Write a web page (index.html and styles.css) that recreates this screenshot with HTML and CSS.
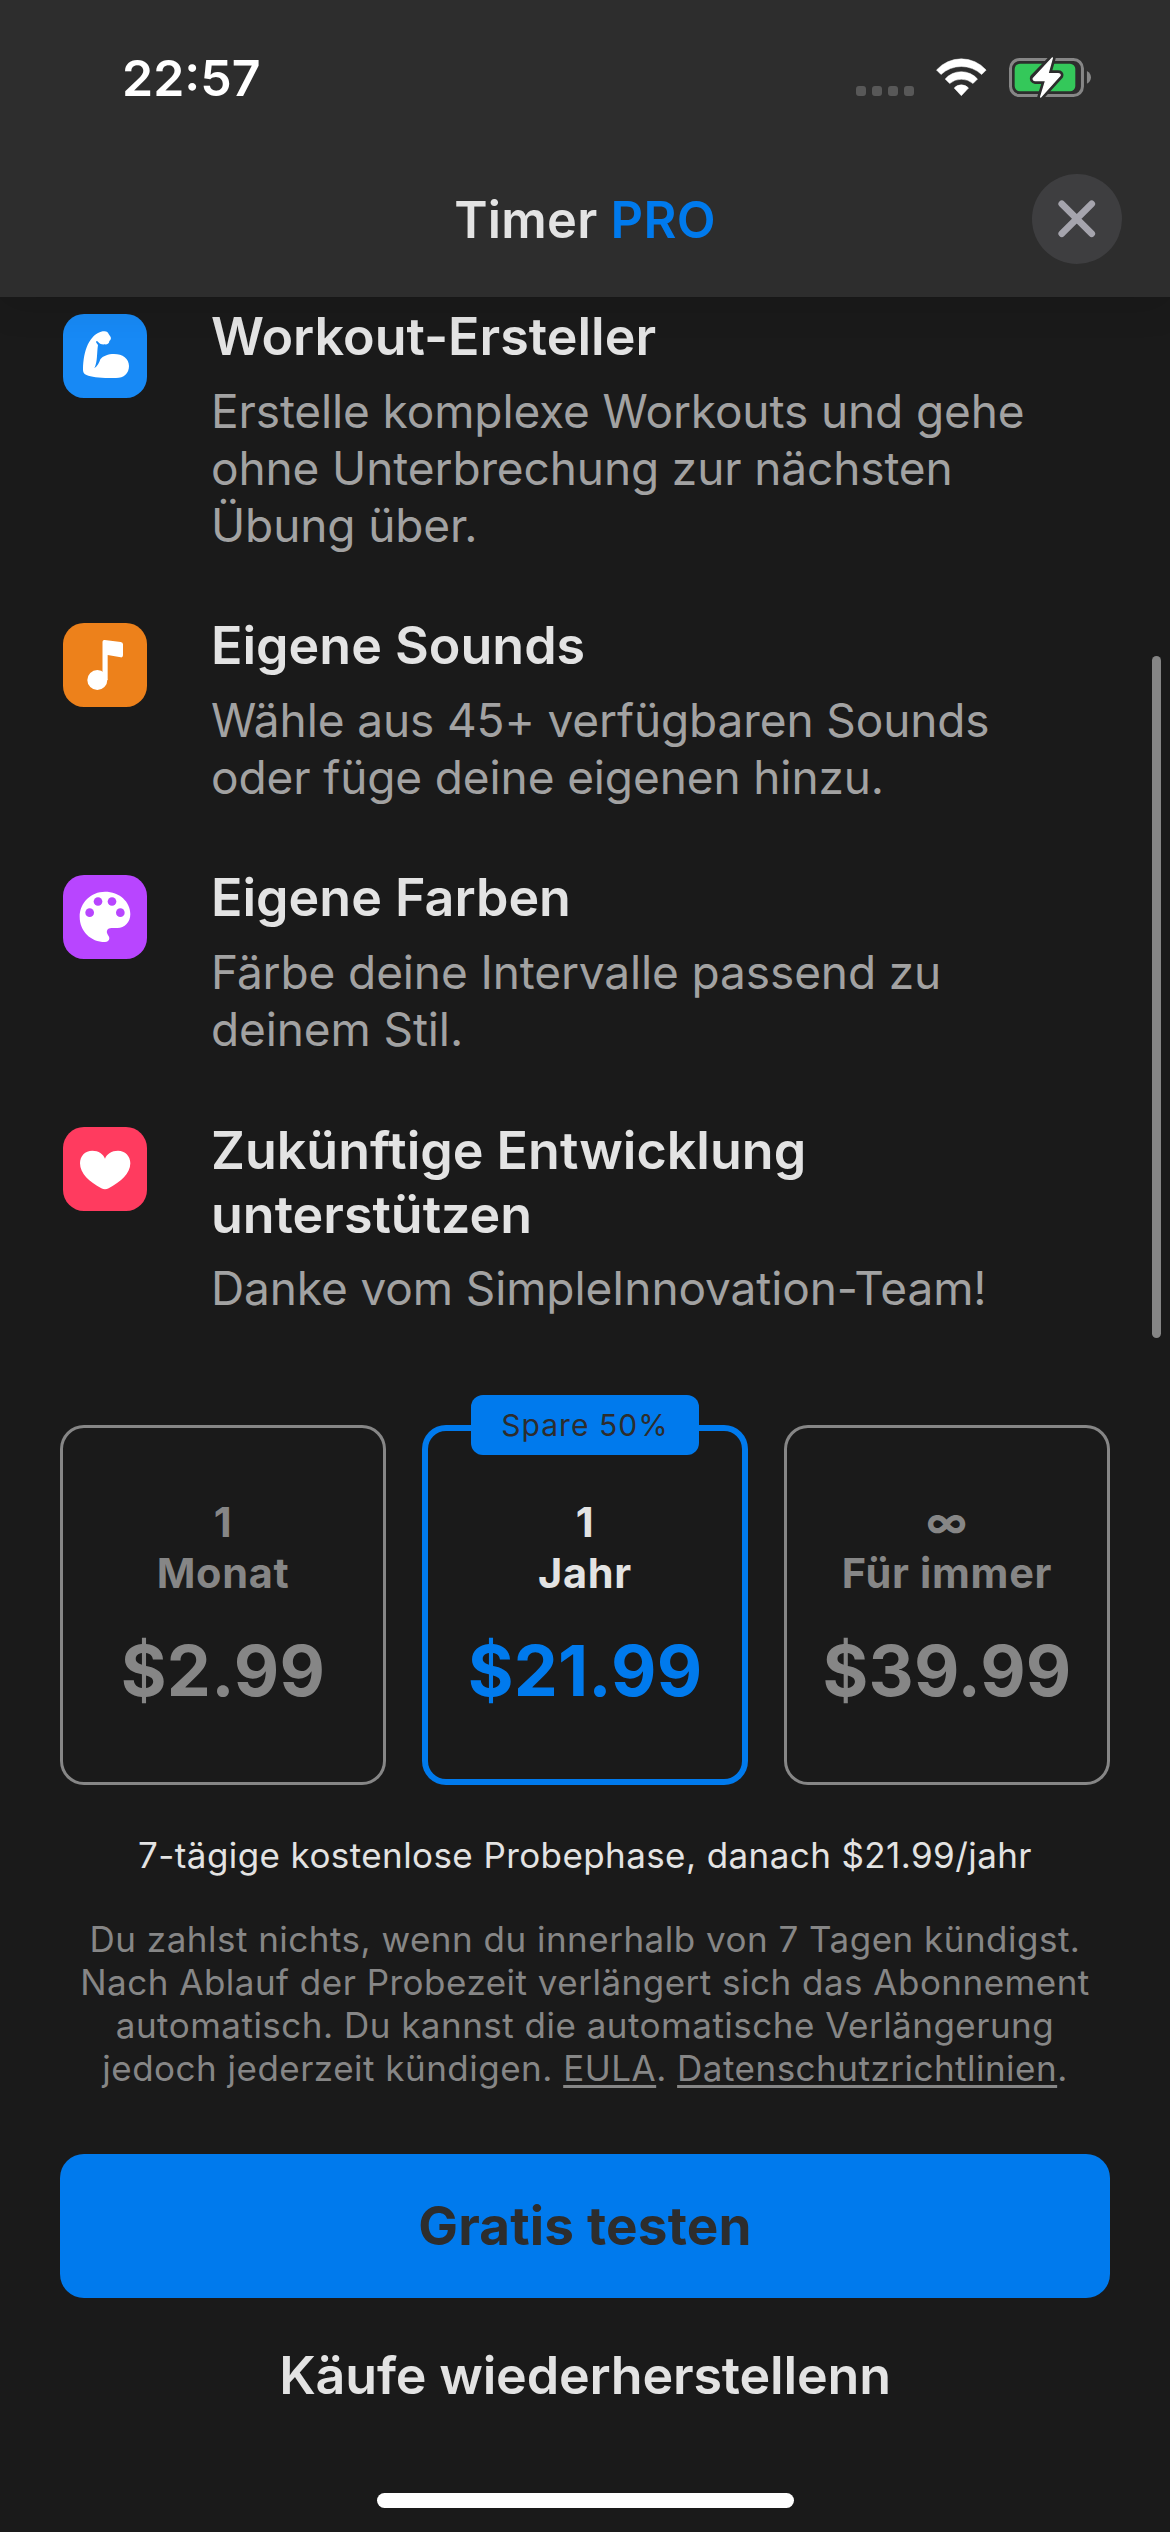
FILE: index.html
```html
<!DOCTYPE html>
<html lang="de">
<head>
<meta charset="utf-8">
<title>Timer PRO</title>
<link rel="stylesheet" href="styles.css">
</head>
<body>
<div class="screen">
  <header class="header">
    <div class="status">
      <span class="time">22:57</span>
      <div class="indicators">
        <div class="signal"><i></i><i></i><i></i><i></i></div>
        <svg class="wifi" viewBox="348 54 153 117">
          <g fill="#fff" stroke="#fff" stroke-width="1.5" stroke-linejoin="round">
            <path d="M349.500 90A99.700 99.700 0 0 1 498.500 90L485 103.500A89.500 89.500 0 0 0 363 103.500Z"/>
            <path d="M375.500 117A64.600 64.600 0 0 1 472.500 117L459 130.500A53.600 53.600 0 0 0 389 130.500Z"/>
            <path d="M402.500 144A29 29 0 0 1 445.500 144L424 167Z"/>
          </g>
        </svg>
        <svg class="battery" viewBox="567 51 247 123">
          <rect x="571.500" y="58.500" width="216" height="108" rx="27" fill="none" stroke="#868686" stroke-width="9"/>
          <rect x="584" y="71" width="182" height="83" rx="16" fill="#34c85a"/>
          <path d="M801 93C809 97 813 104 813 112S809 127 801 131Z" fill="#868686"/>
          <path d="M697 54L640 113Q638 121 646 122H677L662 171L720 107Q722 101 714 101H684Z" fill="#2d2d2d" stroke="#2d2d2d" stroke-width="20" stroke-linejoin="round"/>
          <path d="M697 54L640 115Q638 121 646 122H677L662 171L720 107Q722 101 714 101H684Z" fill="#fff" stroke="#fff" stroke-width="4" stroke-linejoin="round"/>
        </svg>
      </div>
    </div>
    <div class="navbar">
      <h1 class="title">Timer <span>PRO</span></h1>
      <button class="close" aria-label="Schließen">
        <svg viewBox="0 0 90 90"><path d="M29.800 29.800L59.700 59.700M59.700 29.800L29.800 59.700" stroke="#a5a4ad" stroke-width="6.800" stroke-linecap="round"/></svg>
      </button>
    </div>
  </header>

  <main class="content">
    <section class="features">
      <article class="feature">
        <svg class="tile blue" viewBox="69 72 252 252"><path fill="#fff" d="M129 238C130 182 148 133 188 124C198 122 204 125 206 132L212 141C214 146 212 150 208 153C208 160 202 164 194 163C184 164 177 160 174 155C170 151 167 154 169 158L174 165C170 190 173 215 163 235C172 230 178 218 181 208C188 198 205 192 222 192C248 192 267 206 267 228C267 250 252 264 228 264H196C167 263 146 260 135 253C130 249 129 244 129 238Z"/></svg>
        <div class="copy">
          <h2>Workout-Ersteller</h2>
          <p>Erstelle komplexe Workouts und gehe<br>ohne Unterbrechung zur nächsten<br>Übung über.</p>
        </div>
      </article>
      <article class="feature">
        <svg class="tile orange" viewBox="69 69 252 252"><g fill="#fff"><circle cx="172" cy="240" r="30"/><path d="M187.500 240V125Q188 119 194 120L242 126Q249 127 249 133V166Q249 173 242 172L203 165V240Z"/></g></svg>
        <div class="copy">
          <h2>Eigene Sounds</h2>
          <p>Wähle aus 45+ verfügbaren Sounds<br>oder füge deine eigenen hinzu.</p>
        </div>
      </article>
      <article class="feature">
        <svg class="tile purple" viewBox="69 75 252 252"><path fill="#fff" d="M195 125C238 125 271 155 271 192C271 217 254 234 232 234H214C203 234 198 243 202 251C204 256 208 259 208 265C208 272 202 276 195 276C152 276 119 243 119 200C119 158 153 125 195 125Z"/><g fill="#b845ff"><circle cx="149" cy="188" r="13"/><circle cx="174" cy="154.500" r="13"/><circle cx="216" cy="154.500" r="13"/><circle cx="241" cy="188" r="13"/></g></svg>
        <div class="copy">
          <h2>Eigene Farben</h2>
          <p>Färbe deine Intervalle passend zu<br>deinem Stil.</p>
        </div>
      </article>
      <article class="feature">
        <svg class="tile red" viewBox="69 831 252 252"><path fill="#fff" d="M195 926C190 912 176 902 157 902C135 902 120 918 120 940C120 970 148 996 184 1015Q195 1021 206 1015C242 996 271 970 271 940C271 918 255 902 234 902C215 902 200 912 195 926Z"/></svg>
        <div class="copy wrapped">
          <h2>Zukünftige Entwicklung<br>unterstützen</h2>
          <p>Danke vom SimpleInnovation-Team!</p>
        </div>
      </article>
    </section>

    <section class="plans">
      <div class="plan">
        <span class="term">1</span>
        <span class="term">Monat</span>
        <span class="price">$2.99</span>
      </div>
      <div class="plan selected">
        <span class="badge">Spare 50%</span>
        <span class="term">1</span>
        <span class="term">Jahr</span>
        <span class="price">$21.99</span>
      </div>
      <div class="plan">
        <span class="term">∞</span>
        <span class="term">Für immer</span>
        <span class="price">$39.99</span>
      </div>
    </section>

    <p class="trial">7-tägige kostenlose Probephase, danach $21.99/jahr</p>
    <p class="legal">Du zahlst nichts, wenn du innerhalb von 7 Tagen kündigst.<br>Nach Ablauf der Probezeit verlängert sich das Abonnement<br>automatisch. Du kannst die automatische Verlängerung<br>jedoch jederzeit kündigen. <a>EULA</a>. <a>Datenschutzrichtlinien</a>.</p>
    <button class="primary">Gratis testen</button>
    <button class="restore">Käufe wiederherstellenn</button>
  </main>
  <div class="home"></div>
  <div class="scrollbar"></div>
</div>
</body>
</html>
```

FILE: styles.css
```css
* {
  box-sizing: border-box;
  margin: 0;
  padding: 0;
}

body {
  background: #1a1a1a;
  color: #e3e3e3;
  font-family: Inter, "Liberation Sans", sans-serif;
}

button {
  border: 0;
  background: none;
  color: inherit;
  font: inherit;
}

svg {
  display: block;
  flex: none;
}

.screen {
  position: relative;
  display: flex;
  flex-direction: column;
  width: 1170px;
  height: 2532px;
  overflow: hidden;
}

/* Header */
.header {
  position: relative;
  z-index: 1;
  flex: none;
  height: 297px;
  padding-top: 48px;
  background: #2d2d2d;
  box-shadow: 0 6px 36px rgba(0, 0, 0, 0.13);
}

.status {
  display: flex;
  justify-content: space-between;
  height: 60px;
  padding: 0 79px 0 122px;
}

.time {
  color: #fff;
  font-size: 50px;
  font-weight: 600;
  line-height: 60px;
}

.indicators {
  display: flex;
  align-items: flex-end;
  height: 50px;
}

.signal {
  display: flex;
  gap: 6px;
  margin: 0 22px 2px 0;
}

.signal i {
  width: 10px;
  height: 10px;
  border-radius: 3px;
  background: #585858;
}

.wifi {
  width: 51px;
  height: 39px;
  margin: 0 22px 1px 0;
}

.battery {
  width: 82.300px;
  height: 41px;
}

.navbar {
  display: grid;
  grid-template-columns: 90px 1fr 90px;
  align-items: center;
  height: 90px;
  margin-top: 66px;
  padding: 0 48px;
}

.title {
  grid-column: 2;
  padding-top: 2px;
  font-size: 50.500px;
  font-weight: 600;
  line-height: 60px;
  letter-spacing: 0.300px;
  text-align: center;
}

.title span {
  color: #007aed;
}

.close {
  width: 90px;
  height: 90px;
  border-radius: 50%;
  background: #3e3e40;
}

/* Feature list */
.content {
  display: flex;
  flex-direction: column;
  padding: 8px 60px 0;
}

.features {
  display: flex;
  flex-direction: column;
  gap: 60px;
}

.feature {
  display: flex;
  gap: 64px;
  padding-left: 3px;
}

.tile {
  width: 84px;
  height: 84px;
  margin-top: 9px;
  border-radius: 21px;
}

.blue { background: #1789f5; }
.orange { background: #ed811b; }
.purple { background: #b845ff; }
.red { background: #ff3b5f; }

.copy {
  display: flex;
  flex-direction: column;
  gap: 14px;
}

.copy h2 {
  font-size: 52px;
  font-weight: 600;
  line-height: 64px;
}

.wrapped {
  gap: 13px;
  padding-top: 1px;
}

.copy p {
  color: #a2a2a2;
  font-size: 46px;
  line-height: 57px;
  letter-spacing: -0.120px;
}

/* Plans */
.plans {
  display: grid;
  grid-template-columns: repeat(3, 1fr);
  gap: 36px;
  margin-top: 108px;
}

.plan {
  position: relative;
  display: flex;
  flex-direction: column;
  align-items: center;
  height: 360px;
  padding-top: 72px;
  border-radius: 24px;
  box-shadow: inset 0 0 0 3px #868686;
  color: #868686;
}

.term {
  font-size: 41.500px;
  font-weight: 650;
  line-height: 51px;
  letter-spacing: 0.700px;
}

.price {
  margin-top: 30px;
  font-size: 70px;
  font-weight: 700;
  line-height: 84px;
  letter-spacing: 0.200px;
}

.selected {
  box-shadow: inset 0 0 0 6px #007aed;
  color: #e3e3e3;
}

.selected .price {
  color: #007aed;
}

.badge {
  position: absolute;
  top: -30px;
  left: 49px;
  width: 228px;
  height: 60px;
  border-radius: 12px;
  background: #007aed;
  color: #2d2d2d;
  font-size: 30px;
  line-height: 61px;
  letter-spacing: 1.050px;
  text-align: center;
}

/* Footer copy and actions */
.trial,
.legal {
  font-size: 35px;
  line-height: 43px;
  text-align: center;
  white-space: nowrap;
}

.trial {
  margin-top: 49px;
  letter-spacing: 0.410px;
}

.legal {
  margin-top: 41px;
  color: #868686;
  letter-spacing: 0.490px;
}

.legal a {
  text-decoration: underline;
  text-decoration-thickness: 3px;
  text-decoration-skip-ink: none;
  text-underline-offset: 4px;
}

.primary {
  height: 144px;
  margin-top: 64px;
  border-radius: 24px;
  background: #007aed;
  color: #2d2d2d;
  font-size: 53px;
  font-weight: 700;
  letter-spacing: 0.200px;
}

.restore {
  margin-top: 46px;
  font-size: 52px;
  font-weight: 600;
  line-height: 64px;
  letter-spacing: -0.180px;
}

.home {
  width: 417px;
  height: 15px;
  margin: auto auto 24px;
  border-radius: 8px;
  background: #fff;
}

.scrollbar {
  position: absolute;
  top: 656px;
  left: 1152px;
  width: 9px;
  height: 682px;
  border-radius: 5px;
  background: #858585;
}
```
